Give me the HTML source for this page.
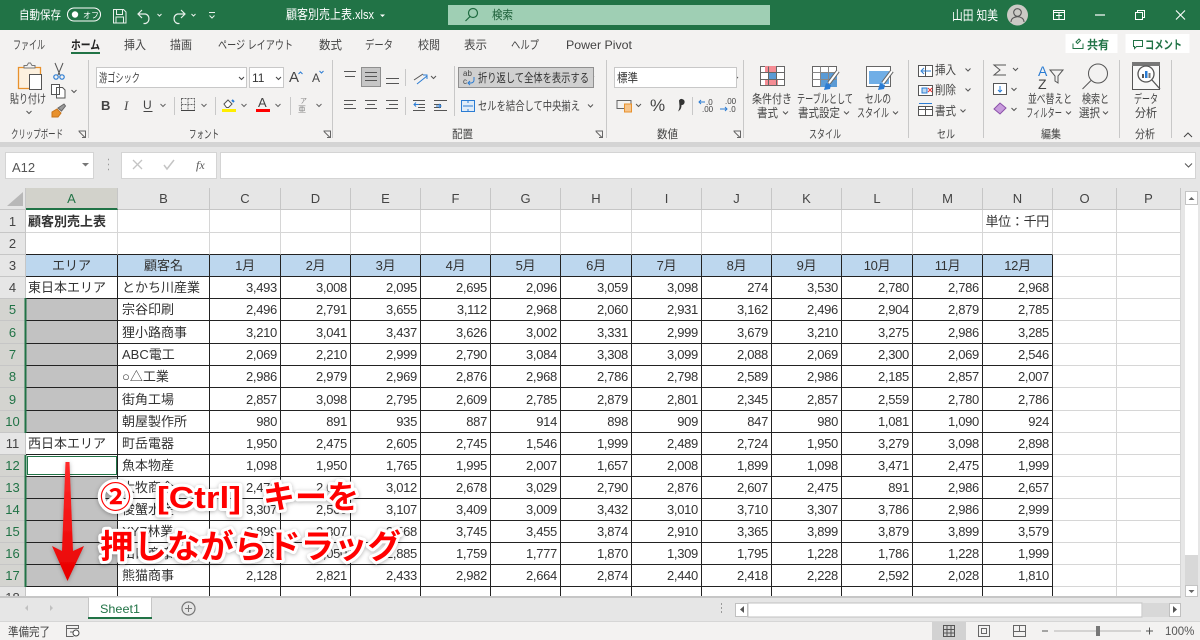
<!DOCTYPE html>
<html lang="ja"><head><meta charset="utf-8"><title>顧客別売上表.xlsx</title>
<style>
html,body{margin:0;padding:0;width:1200px;height:640px;overflow:hidden;background:#e6e6e6}
body{position:relative;font-family:"Liberation Sans","Noto Sans CJK JP",sans-serif}
.abs{position:absolute}
svg text{font-family:"Liberation Sans","Noto Sans CJK JP",sans-serif;font-size:12px;fill:#444}
#wrap{position:absolute;left:0;top:188px;width:1181px;height:409px;overflow:hidden;background:#fff}
table{table-layout:fixed;width:1181px;border-collapse:separate;border-spacing:0;font-size:13px;color:#333}
th,td{box-sizing:border-box;padding:0;white-space:nowrap;overflow:hidden;font-weight:400;line-height:15px}
th{background:#e6e6e6;color:#444;border-right:1px solid #c6c6c6;border-bottom:1px solid #c6c6c6;text-align:center;font-size:13px}
th.s{background:#d4d4d0;color:#217346}
tr:first-child th.s{border-bottom:2px solid #217346;background:#d2d2cb}
td{border-right:1px solid #d6d6d6;border-bottom:1px solid #d6d6d6;text-align:right;padding:0 3px 0 2px;letter-spacing:-.3px}
td:nth-child(2){text-align:left;letter-spacing:0;padding:0 1px 0 2px}
td:nth-child(3){text-align:left;letter-spacing:0;padding:0 1px 0 4px}
tr:nth-child(n+4):nth-child(-n+19) td:nth-child(-n+15){border-right-color:#222;border-bottom-color:#222}
tr:nth-child(3) td:nth-child(-n+15){border-bottom-color:#222}
tr:nth-child(4) td:nth-child(-n+15){background:#bdd7ee;text-align:center;padding:0}
tr td.g.g{background:#c2c2c2;border-bottom-color:#a9a9a9;border-right-color:#444}
tr td.g.l{border-bottom-color:#222}
.b{font-weight:700}
</style></head><body>

<div class="abs" style="left:0;top:0;width:1200px;height:30px;background:#217346"></div>
<div class="abs" style="left:0;top:30px;width:1200px;height:112px;background:#f3f2f1"></div>
<div class="abs" style="left:0;top:142px;width:1200px;height:5px;background:#d4d4d4"></div>

<svg class="abs" style="left:0;top:0" width="1200" height="188" viewBox="0 0 1200 188">
<!-- title bar -->
<g>
<text x="19" y="19" textLength="42" lengthAdjust="spacingAndGlyphs" style="fill:#fff">自動保存</text>
<rect x="67.500" y="8" width="33" height="13" rx="6.500" fill="none" stroke="#fff"/>
<circle cx="75" cy="14.500" r="3.200" fill="#fff"/>
<text x="83" y="18" style="fill:#fff;font-size:8px">オフ</text>
<path d="M113.500 9.500h10l2.500 2.500v11h-12.500zM116.500 9.500v5h6v-5M116 23v-6h7.500v6" fill="none" stroke="#e8f0eb"/>
<path d="M142 10l-4 4 4 4M138.500 14h7a5 5 0 0 1 0 9.500h-2" fill="none" stroke="#e8f0eb" stroke-width="1.200"/>
<path d="M157.500 14l2 2 2-2M191.500 14l2 2 2-2" fill="none" stroke="#e8f0eb"/>
<path d="M181 10l4 4-4 4M184.500 14h-7a5 5 0 0 0 0 9.500h2" fill="none" stroke="#e8f0eb" stroke-width="1.200"/>
<path d="M209 12.500h6M209.500 15.500l2.500 2.500 2.500-2.500" fill="none" stroke="#e8f0eb"/>
<text x="286" y="19" textLength="88" lengthAdjust="spacingAndGlyphs" style="fill:#fff;font-size:13px">顧客別売上表.xlsx</text>
<path d="M380 14.500h5l-2.500 2.500z" fill="#fff"/>
<rect x="448" y="5" width="322" height="20" fill="#9fcfb4"/>
<circle cx="473" cy="13" r="4.500" fill="none" stroke="#1e6b40" stroke-width="1.200"/>
<path d="M470 16.500l-4.500 4.500" stroke="#1e6b40" stroke-width="1.200"/>
<text x="492" y="19" textLength="21" lengthAdjust="spacingAndGlyphs" style="fill:#1b5e37">検索</text>
<text x="952" y="20" textLength="46" lengthAdjust="spacingAndGlyphs" style="fill:#fff;font-size:13px">山田 知美</text>
<circle cx="1017.500" cy="15" r="10.500" fill="#cbcac5"/>
<circle cx="1017.500" cy="12.500" r="3.800" fill="none" stroke="#555" stroke-width="1.100"/>
<path d="M1011 22c0-7 13-7 13 0" fill="none" stroke="#555" stroke-width="1.100"/>
<path d="M1053.500 10.500h11v9h-11zM1053.500 12.500h11M1059 12.500v7M1056 15.500h6" fill="none" stroke="#fff"/>
<path d="M1095 15h10" stroke="#fff" stroke-width="1.200"/>
<path d="M1135.500 12.500h7v7h-7zM1137.500 12.500v-2h7v7h-2" fill="none" stroke="#fff"/>
<path d="M1176 10.500l9 9M1185 10.500l-9 9" stroke="#fff" stroke-width="1.100"/>
</g>
<!-- tabs -->
<g>
<text x="13" y="49" textLength="32" lengthAdjust="spacingAndGlyphs">ファイル</text>
<text x="71" y="49" textLength="29" lengthAdjust="spacingAndGlyphs" style="font-weight:700;fill:#222">ホーム</text>
<rect x="71" y="52" width="29" height="2" fill="#217346"/>
<text x="124" y="49" textLength="22" lengthAdjust="spacingAndGlyphs">挿入</text>
<text x="170" y="49" textLength="22" lengthAdjust="spacingAndGlyphs">描画</text>
<text x="218" y="49" textLength="75" lengthAdjust="spacingAndGlyphs">ページ レイアウト</text>
<text x="319" y="49" textLength="23" lengthAdjust="spacingAndGlyphs">数式</text>
<text x="365" y="49" textLength="28" lengthAdjust="spacingAndGlyphs">データ</text>
<text x="418" y="49" textLength="22" lengthAdjust="spacingAndGlyphs">校閲</text>
<text x="464" y="49" textLength="23" lengthAdjust="spacingAndGlyphs">表示</text>
<text x="511" y="49" textLength="28" lengthAdjust="spacingAndGlyphs">ヘルプ</text>
<text x="566" y="49" textLength="66" lengthAdjust="spacingAndGlyphs">Power Pivot</text>
</g>
<rect x="1065.500" y="34" width="52" height="19" fill="#fff"/>
<rect x="1125.500" y="34" width="64" height="19" fill="#fff"/>
<path d="M1073 43.500v5h10v-5M1076 42l3-3 1.500 1.500-3 3z" fill="none" stroke="#217346"/>
<text x="1087" y="49" textLength="22" lengthAdjust="spacingAndGlyphs" style="fill:#217346;font-weight:700">共有</text>
<path d="M1133.500 40.500h9v6h-6l-2 2v-2h-1z" fill="none" stroke="#217346"/>
<text x="1145" y="49" textLength="37" lengthAdjust="spacingAndGlyphs" style="fill:#217346;font-weight:700">コメント</text>

<!-- separators -->
<g stroke="#c8c8c8" stroke-width="1">
<path d="M88.500 60v78M332.500 60v78M606.500 60v78M743.500 60v78M908.500 60v78M983.500 60v78M1119.500 60v78M1171.500 60v78"/>
<path d="M174.500 97v18M215.500 97v18M290.500 97v18M405.500 69v17M405.500 97v18M454.500 66v50M692.500 97v18"/>
</g>
<!-- clipboard -->
<path d="M18.500 67.500h22v21h-22z" fill="#fdf1df" stroke="#e8912d" stroke-width="1.300"/>
<path d="M24 67.500v-2h3l1.500-2.500 2 0 1.500 2.500h3v2.500h-11z" fill="#f3f2f1" stroke="#777"/>
<rect x="29.500" y="74.500" width="12" height="15" fill="#fff" stroke="#555"/>
<text x="10" y="103" textLength="36" lengthAdjust="spacingAndGlyphs">貼り付け</text>
<path d="M26.500 111l2.500 2.500 2.500-2.500M71.500 90l2.500 2.500 2.500-2.500" fill="none" stroke="#555"/>
<path d="M55 63l5 12M63 63l-5 12" stroke="#555" fill="none"/>
<circle cx="56" cy="77" r="2.200" fill="none" stroke="#2b7cd3" stroke-width="1.200"/><circle cx="62" cy="77" r="2.200" fill="none" stroke="#2b7cd3" stroke-width="1.200"/>
<path d="M51.500 84.500h8v10h-8zM56.500 87.500h6l2.500 2.500v8h-8.500z" fill="#fff" stroke="#555"/>
<path d="M58 108l6-4 1.500 2-4 5z" fill="#999" stroke="#666"/>
<path d="M52 112l5-3 4 4-3 4h-6z" fill="#e8912d" stroke="#c8741a"/>
<text x="11" y="138" textLength="52" lengthAdjust="spacingAndGlyphs" style="font-size:11.500px">クリップボード</text>
<g fill="none" stroke="#666"><path d="M78.500 131h7v7M79 131.500l6 6M82 137.500h3.500v-3.500"/>
<path d="M323.500 131h7v7M324 131.500l6 6M327 137.500h3.500v-3.500"/>
<path d="M595.500 131h7v7M596 131.500l6 6M599 137.500h3.500v-3.500"/>
<path d="M733.500 131h7v7M734 131.500l6 6M737 137.500h3.500v-3.500"/></g>
<!-- font -->
<rect x="96.500" y="67.500" width="150" height="20" fill="#fff" stroke="#c8c8c8"/>
<rect x="249.500" y="67.500" width="34" height="20" fill="#fff" stroke="#c8c8c8"/>
<text x="99" y="82" textLength="41" lengthAdjust="spacingAndGlyphs">游ゴシック</text>
<text x="252" y="82" style="font-size:12px;fill:#333">11</text>
<path d="M239 77l2.500 2.500 2.500-2.500M276 77l2.500 2.500 2.500-2.500" fill="none" stroke="#444"/>
<text x="289" y="82" style="font-size:15px;fill:#444">A</text>
<path d="M298.500 74l2-2 2 2" fill="none" stroke="#2b7cd3"/>
<text x="312" y="82" style="font-size:12px;fill:#444">A</text>
<path d="M319.500 71l2 2 2-2" fill="none" stroke="#2b7cd3"/>
<text x="101" y="110" style="font-size:13px;font-weight:700;fill:#444">B</text>
<text x="124" y="110" style="font-size:13px;font-family:'Liberation Serif';font-style:italic;fill:#444">I</text>
<text x="143" y="109" style="font-size:12px;fill:#444">U</text>
<path d="M143.500 111.500h9" stroke="#444"/>
<g fill="none" stroke="#666"><path d="M160.500 104l2.500 2.500 2.500-2.500M201.500 104l2.500 2.500 2.500-2.500M241.500 104l2.500 2.500 2.500-2.500M275.500 104l2.500 2.500 2.500-2.500M316.500 104l2.500 2.500 2.500-2.500"/></g>
<path d="M181.500 98.500h13v12h-13zM188 98.500v12M181.500 104.500h13" fill="none" stroke="#666" stroke-dasharray="2 1"/>
<path d="M181 110.500h14" stroke="#444"/>
<path d="M224 104l4-4 4 4-3.500 3.500h-2z" fill="#fff" stroke="#555"/>
<path d="M232 100l2 2" stroke="#2b7cd3" stroke-width="2"/>
<rect x="222" y="109" width="14" height="3" fill="#ffee00"/>
<text x="258" y="107" style="font-size:13px;fill:#444">A</text>
<rect x="256" y="109" width="14" height="3" fill="#f00"/>
<text x="300" y="103" style="font-size:7px;fill:#888">ア</text><text x="298" y="112" style="font-size:8px;fill:#888">亜</text>
<text x="189" y="138" textLength="30" lengthAdjust="spacingAndGlyphs" style="font-size:11.500px">フォント</text>
<!-- align -->
<g stroke="#555" fill="none">
<path d="M344 71.500h12M345 76.500h10"/>
<rect x="361.500" y="67.500" width="19" height="19" fill="#c6c6c6" stroke="#8f8f8f"/>
<path d="M365 72.500h12M365 76.500h12M365 80.500h12"/>
<path d="M386 78.500h13M386 83.500h13"/>
<path d="M344 100.500h12M344 104.500h9M344 108.500h12M365 100.500h12M367 104.500h8M365 108.500h12M386 100.500h12M389 104.500h9M386 108.500h12"/>
<path d="M413 100.500h12M418 104.500h7M418 107.500h7M413 110.500h12M434 100.500h13M434 104.500h7M434 107.500h7M434 110.500h13"/>
<path d="M414 80l9-6" stroke="#555"/><path d="M417 84l10-8M423 75h4v4" stroke="#2b7cd3"/>
<path d="M431 76l2.500 2.500 2.500-2.500" />
<path d="M589 76l2.500 2.500 2.500-2.500M588 104.500l2.500 2.500 2.500-2.500M733 77l2.500 2.500 2.500-2.500M636 104l2.500 2.500 2.500-2.500"/>
</g>
<path d="M419 104.500h-5M416 102.500l-2 2 2 2M436 106h5M439 104l2 2-2 2" fill="none" stroke="#2b7cd3"/>
<rect x="458.500" y="67.500" width="135" height="20" fill="#d0d0d0" stroke="#909090"/>
<text x="463" y="76" style="font-size:8px">ab</text><text x="463" y="84" style="font-size:8px">c</text>
<path d="M474 77v3a3 3 0 0 1-3 3h-3M470 81l-2 2 2 2" fill="none" stroke="#2b7cd3"/>
<text x="478" y="82" textLength="111" lengthAdjust="spacingAndGlyphs" style="fill:#333">折り返して全体を表示する</text>
<rect x="461.500" y="100.500" width="13" height="11" fill="#e0ecf8" stroke="#2b7cd3"/>
<path d="M463 106h10M468 100v3M468 109v3" stroke="#2b7cd3"/>
<text x="478" y="110" textLength="102" lengthAdjust="spacingAndGlyphs">セルを結合して中央揃え</text>
<text x="452" y="138" textLength="21" lengthAdjust="spacingAndGlyphs" style="font-size:11.500px">配置</text>
<!-- number -->
<rect x="614.500" y="67.500" width="122" height="20" fill="#fff" stroke="#c8c8c8"/>
<text x="617" y="82" textLength="21" lengthAdjust="spacingAndGlyphs" style="fill:#333">標準</text>
<path d="M617 100.500h14v8h-14z" fill="#f3f2f1" stroke="#666"/>
<rect x="624.500" y="104" width="7" height="8" fill="#f6c58c" stroke="#e8912d"/>
<text x="650" y="111" style="font-size:17px">%</text>
<path d="M679 100.500a3 3 0 1 1 2.500 4.500c0 3-1 5-3.500 6.500c1-2 1.500-3.500 1.500-5.500z" fill="#333"/>
<text x="706" y="105" style="font-size:8px">.0</text><text x="702" y="112" style="font-size:8px">.00</text>
<path d="M699 102h6M701 100l-2 2 2 2" stroke="#2b7cd3" fill="none"/>
<text x="725" y="104" style="font-size:8px">.00</text><text x="729" y="112" style="font-size:8px">.0</text>
<path d="M720 109h7M725 107l2 2-2 2" stroke="#2b7cd3" fill="none"/>
<text x="657" y="138" textLength="21" lengthAdjust="spacingAndGlyphs" style="font-size:11.500px">数値</text>
<!-- styles -->
<g>
<rect x="760.500" y="66.500" width="24" height="19" fill="#fff" stroke="#666"/>
<rect x="765" y="66" width="11" height="6" fill="#f58c94"/><rect x="768" y="72" width="8" height="7" fill="#5b9bd5"/><rect x="765" y="79" width="13" height="6" fill="#f58c94"/>
<path d="M760.500 72.500h24M760.500 79.500h24M768.500 66.500v19M776.500 66.500v19" stroke="#666" fill="none"/>
<rect x="812.500" y="66.500" width="24" height="20" fill="#fff" stroke="#666"/>
<rect x="820" y="72" width="17" height="15" fill="#5b9bd5"/>
<path d="M812.500 72.500h24M812.500 79.500h24M820.500 66.500v20M828.500 66.500v20" stroke="#888" fill="none"/>
<path d="M838 71l-9 12" stroke="#666" stroke-width="4" fill="none"/><path d="M838 71l-9 12" stroke="#fff" stroke-width="2" fill="none"/>
<path d="M824 90l2-7 5 2-1 4z" fill="#2b7cd3"/>
<rect x="866.500" y="66.500" width="24" height="20" fill="#fff" stroke="#666"/>
<rect x="869" y="71" width="20" height="13" fill="#70aee6"/>
<path d="M892 71l-9 12" stroke="#666" stroke-width="4" fill="none"/><path d="M892 71l-9 12" stroke="#fff" stroke-width="2" fill="none"/>
<path d="M878 90l2-7 5 2-1 4z" fill="#2b7cd3"/>
<text x="752" y="103" textLength="40" lengthAdjust="spacingAndGlyphs">条件付き</text>
<text x="757" y="117" textLength="21" lengthAdjust="spacingAndGlyphs">書式</text>
<text x="797" y="103" textLength="56" lengthAdjust="spacingAndGlyphs">テーブルとして</text>
<text x="798" y="117" textLength="42" lengthAdjust="spacingAndGlyphs">書式設定</text>
<text x="865" y="103" textLength="26" lengthAdjust="spacingAndGlyphs">セルの</text>
<text x="857" y="117" textLength="32" lengthAdjust="spacingAndGlyphs">スタイル</text>
<path d="M783 111.500l2.500 2.500 2.500-2.500M844 111.500l2.500 2.500 2.500-2.500M893 111.500l2.500 2.500 2.500-2.500" fill="none" stroke="#555"/>
<text x="809" y="138" textLength="32" lengthAdjust="spacingAndGlyphs" style="font-size:11.500px">スタイル</text>
</g>
<!-- cells -->
<g>
<path d="M918.500 65.500h14v11h-14zM925.500 65.500v11" fill="#fff" stroke="#555"/>
<path d="M931 71h-9M924 68l-3 3 3 3" stroke="#2b7cd3" fill="none"/>
<text x="935" y="74" textLength="21" lengthAdjust="spacingAndGlyphs">挿入</text>
<path d="M918.500 85.500h14v10h-14z" fill="#fff" stroke="#555"/>
<rect x="922" y="88" width="5" height="5" fill="#bcd8f2" stroke="#2b7cd3"/>
<path d="M928 88l4 4M932 88l-4 4" stroke="#e33"/>
<text x="935" y="94" textLength="21" lengthAdjust="spacingAndGlyphs">削除</text>
<path d="M918.500 106.500h14v9h-14zM918.500 109.500h14M925.500 106.500v9" fill="#fff" stroke="#555"/>
<path d="M919 103.500h13" stroke="#2b7cd3"/>
<text x="935" y="115" textLength="21" lengthAdjust="spacingAndGlyphs">書式</text>
<path d="M965.500 68.500l2.500 2.500 2.500-2.500M965.500 88.500l2.500 2.500 2.500-2.500M960.500 109.500l2.500 2.500 2.500-2.500" fill="none" stroke="#555"/>
<text x="937" y="138" textLength="18" lengthAdjust="spacingAndGlyphs" style="font-size:11.500px">セル</text>
</g>
<!-- edit -->
<g>
<path d="M1006 65h-12l6 5-6 5h12" fill="none" stroke="#555"/>
<path d="M1013 68l2.500 2.500 2.500-2.500M1011.500 88l2.500 2.500 2.500-2.500M1011.500 108l2.500 2.500 2.500-2.500" fill="none" stroke="#555"/>
<rect x="993.500" y="83.500" width="13" height="11" fill="#fff" stroke="#555"/>
<path d="M1000 86v6M998 90l2 2 2-2" stroke="#2b7cd3" fill="none"/>
<path d="M994 109l6-6 6 5-6 6z" fill="#c79bdc" stroke="#8a4fa8"/>
<text x="1038" y="76" style="font-size:14px;fill:#2b7cd3">A</text>
<text x="1038" y="89" style="font-size:14px;fill:#444">Z</text>
<path d="M1050 70h13l-5 6v7l-3-2v-5z" fill="none" stroke="#555"/>
<text x="1028" y="103" textLength="44" lengthAdjust="spacingAndGlyphs">並べ替えと</text>
<text x="1026" y="117" textLength="36" lengthAdjust="spacingAndGlyphs">フィルター</text>
<circle cx="1098" cy="73.500" r="9.500" fill="none" stroke="#555"/>
<path d="M1091 80.500l-8.500 8.500" stroke="#555" fill="none"/>
<text x="1082" y="103" textLength="27" lengthAdjust="spacingAndGlyphs">検索と</text>
<text x="1079" y="117" textLength="21" lengthAdjust="spacingAndGlyphs">選択</text>
<path d="M1066 111.500l2.500 2.500 2.500-2.500M1103 111.500l2.500 2.500 2.500-2.500" fill="none" stroke="#555"/>
<text x="1041" y="138" textLength="20" lengthAdjust="spacingAndGlyphs" style="font-size:11.500px">編集</text>
</g>
<!-- analysis -->
<rect x="1132.500" y="62.500" width="27" height="27" fill="#f8f8f8" stroke="#555"/>
<rect x="1132" y="62" width="28" height="4" fill="#777"/>
<circle cx="1146" cy="74" r="8" fill="#fff" stroke="#555" stroke-width="1.300"/>
<rect x="1142" y="74" width="2" height="4" fill="#555"/><rect x="1145" y="71" width="2.500" height="7" fill="#2b7cd3"/><rect x="1148.500" y="73" width="2" height="5" fill="#777"/>
<path d="M1152 80l8 9" stroke="#555" stroke-width="1.300"/>
<text x="1134" y="103" textLength="24" lengthAdjust="spacingAndGlyphs">データ</text>
<text x="1135" y="117" textLength="22" lengthAdjust="spacingAndGlyphs">分析</text>
<text x="1135" y="138" textLength="20" lengthAdjust="spacingAndGlyphs" style="font-size:11.500px">分析</text>
<path d="M1184 137l4-4 4 4" fill="none" stroke="#444"/>
<!-- formula bar -->
<rect x="5.500" y="152.500" width="88" height="26" fill="#fff" stroke="#d4d4d4"/>
<text x="12" y="172" style="font-size:13px;fill:#555">A12</text>
<path d="M82 163h7l-3.500 3.500z" fill="#777"/>
<path d="M108 159.500h1M108 164.500h1M108 169.500h1" stroke="#999" stroke-width="1.500"/>
<rect x="121.500" y="152.500" width="95" height="26" fill="#fff" stroke="#d4d4d4"/>
<path d="M133 160l9 9M142 160l-9 9" stroke="#c4c4c4" stroke-width="1.300"/>
<path d="M164 165l3 4 7-9" fill="none" stroke="#c4c4c4" stroke-width="1.500"/>
<text x="196" y="169" style="font-family:'Liberation Serif';font-style:italic;font-size:12px;fill:#555">fx</text>
<rect x="220.500" y="152.500" width="975" height="26" fill="#fff" stroke="#d4d4d4"/>
<path d="M1185 163.500l3.500 3.500 3.500-3.500" fill="none" stroke="#555"/>
</svg>

<div id="wrap">
<table>
<colgroup><col style="width:26px"><col style="width:92px"><col style="width:92px"><col style="width:71px"><col style="width:70px"><col style="width:70px"><col style="width:70px"><col style="width:70px"><col style="width:71px"><col style="width:70px"><col style="width:70px"><col style="width:70px"><col style="width:71px"><col style="width:70px"><col style="width:70px"><col style="width:64px"><col style="width:64px"></colgroup>
<tr style="height:22px"><th></th><th class="s">A</th><th>B</th><th>C</th><th>D</th><th>E</th><th>F</th><th>G</th><th>H</th><th>I</th><th>J</th><th>K</th><th>L</th><th>M</th><th>N</th><th>O</th><th>P</th></tr>
<tr style="height:23px"><th>1</th><td class="b">顧客別売上表</td><td></td><td></td><td></td><td></td><td></td><td></td><td></td><td></td><td></td><td></td><td></td><td></td><td>単位：千円</td><td></td><td></td></tr>
<tr style="height:22px"><th>2</th><td></td><td></td><td></td><td></td><td></td><td></td><td></td><td></td><td></td><td></td><td></td><td></td><td></td><td></td><td></td><td></td></tr>
<tr style="height:22px"><th>3</th><td>エリア</td><td>顧客名</td><td>1月</td><td>2月</td><td>3月</td><td>4月</td><td>5月</td><td>6月</td><td>7月</td><td>8月</td><td>9月</td><td>10月</td><td>11月</td><td>12月</td><td></td><td></td></tr>
<tr style="height:22px"><th>4</th><td>東日本エリア</td><td>とかち川産業</td><td>3,493</td><td>3,008</td><td>2,095</td><td>2,695</td><td>2,096</td><td>3,059</td><td>3,098</td><td>274</td><td>3,530</td><td>2,780</td><td>2,786</td><td>2,968</td><td></td><td></td></tr>
<tr style="height:22px"><th class="s">5</th><td class="g"></td><td>宗谷印刷</td><td>2,496</td><td>2,791</td><td>3,655</td><td>3,112</td><td>2,968</td><td>2,060</td><td>2,931</td><td>3,162</td><td>2,496</td><td>2,904</td><td>2,879</td><td>2,785</td><td></td><td></td></tr>
<tr style="height:23px"><th class="s">6</th><td class="g"></td><td>狸小路商事</td><td>3,210</td><td>3,041</td><td>3,437</td><td>3,626</td><td>3,002</td><td>3,331</td><td>2,999</td><td>3,679</td><td>3,210</td><td>3,275</td><td>2,986</td><td>3,285</td><td></td><td></td></tr>
<tr style="height:22px"><th class="s">7</th><td class="g"></td><td>ABC電工</td><td>2,069</td><td>2,210</td><td>2,999</td><td>2,790</td><td>3,084</td><td>3,308</td><td>3,099</td><td>2,088</td><td>2,069</td><td>2,300</td><td>2,069</td><td>2,546</td><td></td><td></td></tr>
<tr style="height:22px"><th class="s">8</th><td class="g"></td><td>○△工業</td><td>2,986</td><td>2,979</td><td>2,969</td><td>2,876</td><td>2,968</td><td>2,786</td><td>2,798</td><td>2,589</td><td>2,986</td><td>2,185</td><td>2,857</td><td>2,007</td><td></td><td></td></tr>
<tr style="height:23px"><th class="s">9</th><td class="g"></td><td>街角工場</td><td>2,857</td><td>3,098</td><td>2,795</td><td>2,609</td><td>2,785</td><td>2,879</td><td>2,801</td><td>2,345</td><td>2,857</td><td>2,559</td><td>2,780</td><td>2,786</td><td></td><td></td></tr>
<tr style="height:22px"><th class="s">10</th><td class="g l"></td><td>朝屋製作所</td><td>980</td><td>891</td><td>935</td><td>887</td><td>914</td><td>898</td><td>909</td><td>847</td><td>980</td><td>1,081</td><td>1,090</td><td>924</td><td></td><td></td></tr>
<tr style="height:22px"><th>11</th><td>西日本エリア</td><td>町岳電器</td><td>1,950</td><td>2,475</td><td>2,605</td><td>2,745</td><td>1,546</td><td>1,999</td><td>2,489</td><td>2,724</td><td>1,950</td><td>3,279</td><td>3,098</td><td>2,898</td><td></td><td></td></tr>
<tr style="height:22px"><th class="s">12</th><td></td><td>魚本物産</td><td>1,098</td><td>1,950</td><td>1,765</td><td>1,995</td><td>2,007</td><td>1,657</td><td>2,008</td><td>1,899</td><td>1,098</td><td>3,471</td><td>2,475</td><td>1,999</td><td></td><td></td></tr>
<tr style="height:22px"><th class="s">13</th><td class="g"></td><td>大牧商会</td><td>2,475</td><td>2,050</td><td>3,012</td><td>2,678</td><td>3,029</td><td>2,790</td><td>2,876</td><td>2,607</td><td>2,475</td><td>891</td><td>2,986</td><td>2,657</td><td></td><td></td></tr>
<tr style="height:22px"><th class="s">14</th><td class="g"></td><td>俊蟹水産</td><td>3,307</td><td>2,560</td><td>3,107</td><td>3,409</td><td>3,009</td><td>3,432</td><td>3,010</td><td>3,710</td><td>3,307</td><td>3,786</td><td>2,986</td><td>2,999</td><td></td><td></td></tr>
<tr style="height:22px"><th class="s">15</th><td class="g"></td><td>XYZ林業</td><td>3,899</td><td>2,307</td><td>3,568</td><td>3,745</td><td>3,455</td><td>3,874</td><td>2,910</td><td>3,365</td><td>3,899</td><td>3,879</td><td>3,899</td><td>3,579</td><td></td><td></td></tr>
<tr style="height:22px"><th class="s">16</th><td class="g"></td><td>山口商事</td><td>1,228</td><td>2,050</td><td>2,885</td><td>1,759</td><td>1,777</td><td>1,870</td><td>1,309</td><td>1,795</td><td>1,228</td><td>1,786</td><td>1,228</td><td>1,999</td><td></td><td></td></tr>
<tr style="height:22px"><th class="s">17</th><td class="g l"></td><td>熊猫商事</td><td>2,128</td><td>2,821</td><td>2,433</td><td>2,982</td><td>2,664</td><td>2,874</td><td>2,440</td><td>2,418</td><td>2,228</td><td>2,592</td><td>2,028</td><td>1,810</td><td></td><td></td></tr>
<tr style="height:22px"><th>18</th><td></td><td></td><td></td><td></td><td></td><td></td><td></td><td></td><td></td><td></td><td></td><td></td><td></td><td></td><td></td><td></td></tr>
</table>
</div>

<svg class="abs" style="left:0;top:0" width="1200" height="640" viewBox="0 0 1200 640">
<!-- corner -->
<path d="M7 206L23 192v14z" fill="#b8b8b8"/>
<!-- selection -->
<rect x="24.500" y="298" width="2" height="135" fill="#217346"/>
<rect x="24.500" y="455" width="2" height="132" fill="#217346"/>
<rect x="27.500" y="456.500" width="89" height="18" fill="#fff" stroke="#217346"/>
<!-- scrollbars -->
<rect x="1181" y="188" width="19" height="409" fill="#e6e6e6"/>
<rect x="1185" y="191" width="13" height="406" fill="#fff"/>
<rect x="1185" y="555" width="13" height="30" fill="#d8d8d8"/>
<rect x="1185.500" y="191.500" width="12" height="13" fill="#fff" stroke="#c4c4c4"/>
<rect x="1185.500" y="585.500" width="12" height="11" fill="#fff" stroke="#c4c4c4"/>
<path d="M1188.500 200h6l-3-3zM1188.500 590h6l-3 3z" fill="#666"/>
<!-- sheet bar -->
<rect x="0" y="597" width="1200" height="25" fill="#e6e6e6"/>
<rect x="0" y="596" width="1181" height="2" fill="#c6c6c6"/>
<rect x="0" y="621.500" width="1200" height="1" fill="#c6c6c6"/>
<path d="M28 605v6l-3-3zM50 605v6l3-3z" fill="#c0c0c0"/>
<rect x="88.500" y="597" width="63" height="21" fill="#fff" stroke="#c6c6c6"/>
<rect x="88" y="617" width="64" height="2" fill="#217346"/>
<text x="100" y="613" textLength="40" lengthAdjust="spacingAndGlyphs" style="font-size:12px;fill:#217346">Sheet1</text>
<circle cx="188.500" cy="608.500" r="6.500" fill="none" stroke="#777" stroke-width="1.200"/>
<path d="M185 608.500h7M188.500 605v7" stroke="#777"/>
<path d="M721 604h1M721 608h1M721 612h1" stroke="#999" stroke-width="2"/>
<rect x="735.500" y="603.500" width="12" height="13" fill="#fff" stroke="#c0c0c0"/>
<rect x="748" y="603" width="394" height="14" fill="#fff" stroke="#c0c0c0" stroke-width="1"/>
<rect x="1143" y="603" width="26" height="14" fill="#d8d8d8"/>
<rect x="1169.500" y="603.500" width="11" height="13" fill="#fff" stroke="#c0c0c0"/>
<path d="M744 606v7l-4-3.500zM1173 606v7l4-3.500z" fill="#555"/>
<!-- status -->
<rect x="0" y="622" width="1200" height="18" fill="#f3f2f1"/>
<text x="8" y="636" textLength="42" lengthAdjust="spacingAndGlyphs">準備完了</text>
<path d="M66.500 625.500h12v3h-12zM66.500 628.500v8h7M70 632h3" fill="none" stroke="#666"/>
<circle cx="76" cy="633" r="3" fill="#fff" stroke="#444"/>
<rect x="932" y="622" width="34" height="18" fill="#d2d2d2"/>
<path d="M943.500 625.500h11v11h-11zM943.500 629.500h11M943.500 633h11M947 625.500v11M951 625.500v11" fill="none" stroke="#555"/>
<path d="M978.500 625.500h11v11h-11zM981.500 628.500h5v5h-5z" fill="none" stroke="#666"/>
<path d="M1013.500 625.500h12v11h-12zM1019.500 625.500v6h6M1013.500 631.500h6" fill="none" stroke="#666"/>
<path d="M1042 631h6M1146 631h7M1149.500 627.500v7" stroke="#555"/>
<path d="M1054 631h87" stroke="#b4b4b4"/>
<rect x="1096" y="626" width="4" height="10" fill="#777"/>
<text x="1165" y="635" style="font-size:11.500px;fill:#555">100%</text>
<!-- annotation arrow -->
<defs><linearGradient id="ar" x1="0" y1="0" x2="0" y2="1"><stop offset="0" stop-color="#ff2a2a"/><stop offset="1" stop-color="#e80000"/></linearGradient>
<filter id="sh" x="-30%" y="-30%" width="160%" height="160%"><feDropShadow dx="0" dy="1" stdDeviation="2" flood-color="#000" flood-opacity=".3"/></filter></defs>
<path d="M65.500 462h4l3.500 89 11-5-16.500 35-15.500-35 10 5z" fill="url(#ar)" filter="url(#sh)"/>
<!-- annotation text -->
<g filter="url(#sh)" stroke="#fff" stroke-width="6" stroke-linejoin="round">
<text x="100" y="508" textLength="31" lengthAdjust="spacingAndGlyphs" style="font-size:30px;font-weight:700;fill:#f00;paint-order:stroke fill">②</text>
<text x="157" y="508" textLength="84" lengthAdjust="spacingAndGlyphs" style="font-size:31px;font-weight:700;fill:#f00;paint-order:stroke fill">[Ctrl]</text>
<text x="263" y="508" textLength="96" lengthAdjust="spacingAndGlyphs" style="font-size:32px;font-weight:700;fill:#f00;paint-order:stroke fill">キーを</text>
<text x="100" y="558" textLength="301" lengthAdjust="spacingAndGlyphs" style="font-size:33px;font-weight:700;fill:#f00;paint-order:stroke fill">押しながらドラッグ</text>
</g>
</svg>
</body></html>
